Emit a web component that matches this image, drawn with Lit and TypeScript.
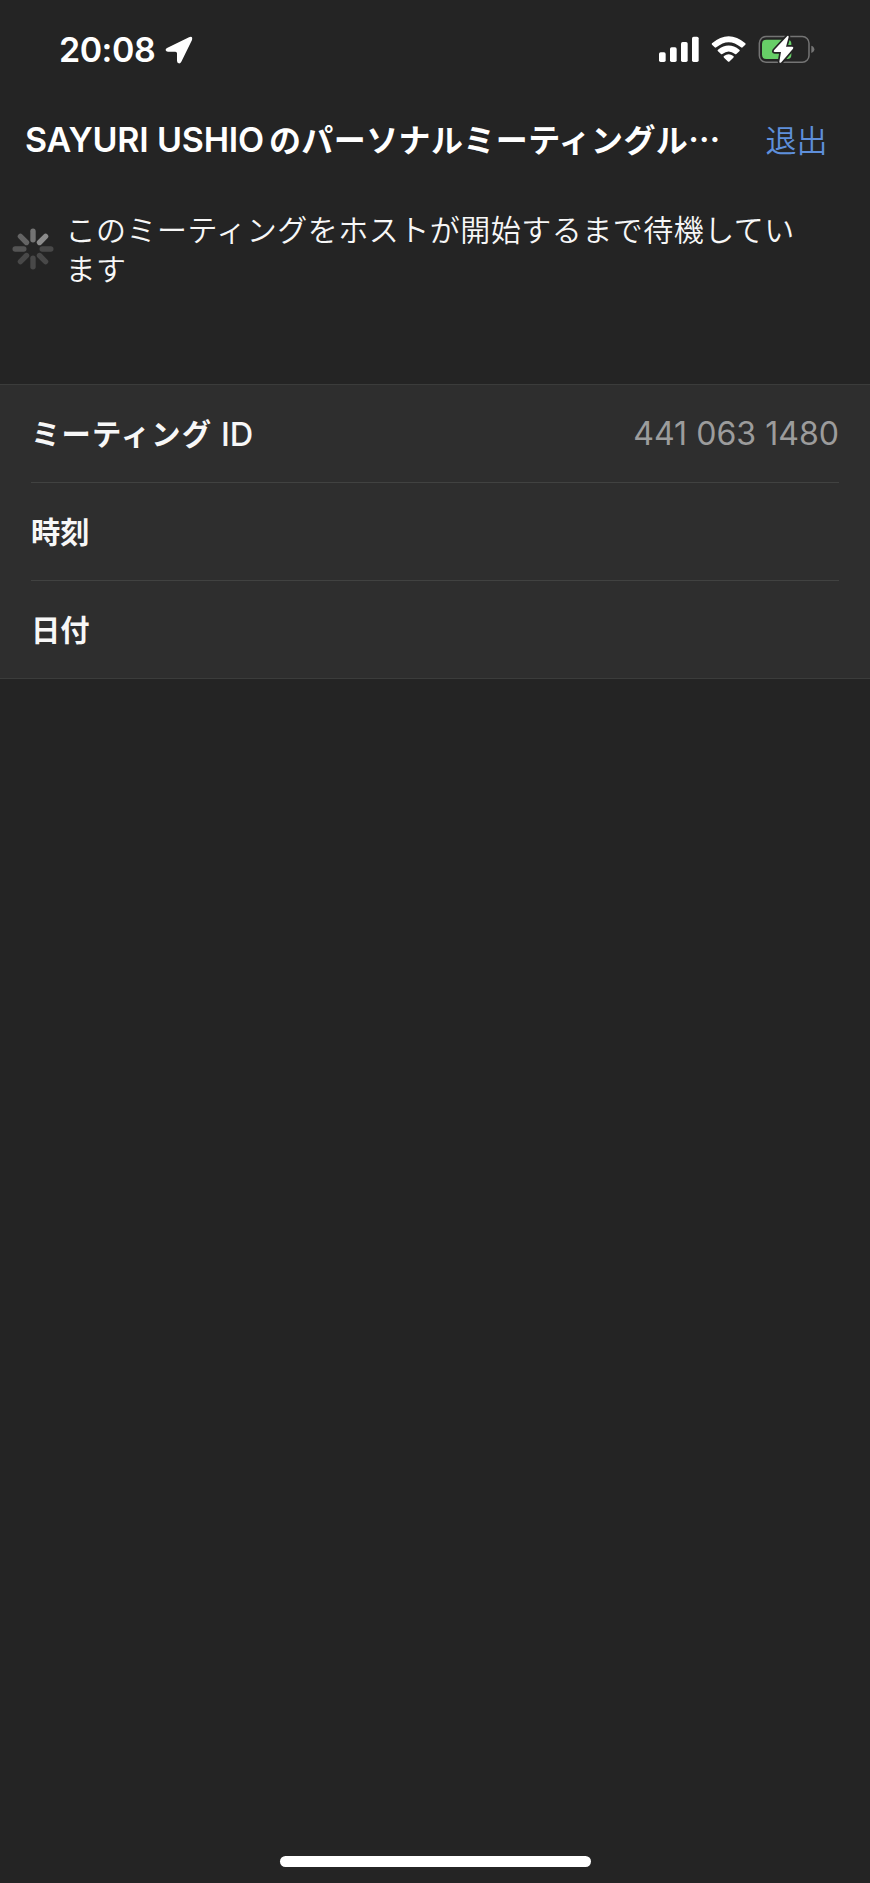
import { LitElement, html, css, svg } from "lit";
import { customElement } from "lit/decorators.js";

const spokes = [
  [0, "#747474"], [45, "#8b8b8b"], [90, "#484848"], [135, "#484848"],
  [180, "#484848"], [225, "#484848"], [270, "#545454"], [315, "#646464"],
] as const;

@customElement("status-bar")
class StatusBar extends LitElement {
  static styles = css`
    :host { display: flex; height: 60px; padding: 20px 55px 0 59px; align-items: center; }
    .time { font: 600 34px/60px Inter, sans-serif; color: #fff; width: 106px; white-space: nowrap; letter-spacing: -0.5px; }
    svg { display: block; height: 60px; flex: none; }
    .arrow { width: 28px; }
    .signal { width: 40px; margin-left: auto; }
    .wifi { width: 36px; margin-left: 12px; }
    .battery { width: 57px; margin-left: 11px; }
  `;
  render() {
    return html`
      <span class="time">20:08</span>
      <svg class="arrow" viewBox="375 0 84 180"><path d="M381 84 L447 52 Q459 47 456 60 L424 125 Q421 131 416 130 Q411 128 411 122 L411 100 Q411 95 406 95 L384 95 Q378 95 377 91 Q376 87 381 84Z" fill="#fff"/></svg>
      <svg class="signal" viewBox="57 0 120 180" fill="#fff">
        <rect x="57" y="97" width="20" height="29" rx="5"/><rect x="90" y="82" width="20" height="44" rx="5"/>
        <rect x="123" y="66" width="20" height="60" rx="5"/><rect x="156" y="50" width="20" height="76" rx="5"/>
      </svg>
      <svg class="wifi" viewBox="213 0 108 180" fill="#fff">
        <path d="M216 70 Q266 28 316 70 Q318 72 316 74 L308 82 Q306 84 303 82 Q266 51 229 82 Q226 84 224 82 L216 74 Q214 72 216 70Z"/>
        <path d="M234 89 Q266 64 298 89 Q301 91 298 94 L289 102 Q287 104 285 102 Q266 87 247 102 Q245 104 243 102 L234 94 Q231 91 234 89Z"/>
        <path d="M252 108 Q266 98 280 108 Q283 110 280 113 L269 124 Q266 127 263 124 L252 113 Q249 110 252 108Z"/>
      </svg>
      <svg class="battery" viewBox="354 0 171 180">
        <rect x="358" y="49.500" width="149" height="77" rx="20" fill="none" stroke="#747474" stroke-width="4.500"/>
        <path d="M514 77 Q523 80 523 88 Q523 96 514 99Z" fill="#747474"/>
        <path d="M379 59 H442 Q454 59 454 71 V105 Q454 117 442 117 H379 Q366 117 366 104 V72 Q366 59 379 59Z" fill="#67ce67"/>
        <path d="M442 48 L402 91 Q399 96 404 96 H423 L418 125 Q419 131 424 127 L459 86 Q462 81 457 80 H438 L446 51 Q446 46 442 48Z" fill="#fff" stroke="#242424" stroke-width="10" stroke-linejoin="round" paint-order="stroke"/>
      </svg>`;
  }
}

@customElement("info-list")
class InfoList extends LitElement {
  static styles = css`
    :host { display: block; box-sizing: border-box; height: 295px; padding: 0 31px; background: #2e2e2e; border-top: 1px solid #3b3c3b; border-bottom: 1px solid #3b3c3b; }
    .row { box-sizing: border-box; height: 98px; display: flex; align-items: center; justify-content: space-between; border-bottom: 1px solid #414241; }
    .row:last-child { border-bottom: 0; }
    .label { display: flex; font: 700 29.3px/44px "Noto Sans CJK JP", sans-serif; color: #f7f7f7; white-space: pre; padding-bottom: 4px; }
    .kana { letter-spacing: 1.2px; }
    .latin { font: 450 32.5px/44px Inter, sans-serif; padding-top: 3px; margin-bottom: -3px; }
    .value { font: 400 32.1px/44px Inter, sans-serif; color: #9c9c9c; white-space: nowrap; }
  `;
  render() {
    return html`
      <div class="row"><span class="label"><span class="kana">ミーティング</span><span class="latin"> ID</span></span><span class="value">441 063 1480</span></div>
      <div class="row"><span class="label">時刻</span></div>
      <div class="row"><span class="label">日付</span></div>`;
  }
}

@customElement("app-root")
class AppRoot extends LitElement {
  static styles = css`
    :host { display: flex; flex-direction: column; height: 1883px; background: #242424; overflow: hidden; font-family: "Noto Sans CJK JP", sans-serif; }
    .header { display: flex; align-items: center; justify-content: space-between; height: 60px; padding: 0 42.5px 0 25px; margin-top: 30px; color: #fff; }
    .title { margin: 0; display: flex; white-space: nowrap; font-weight: 700; font-size: 32px; line-height: 60px; }
    .name { font: 600 34px/60px Inter, sans-serif; letter-spacing: -0.2px; margin-right: 5px; }
    .room { letter-spacing: 0.4px; margin-top: -2px; }
    .leave { font-size: 31px; line-height: 60px; color: #5e8fdb; font-weight: 350; white-space: nowrap; padding-bottom: 2px; }
    .waiting { display: flex; align-items: center; height: 78px; margin-top: 40px; padding-left: 11.5px; }
    .spinner { width: 42px; height: 42px; flex: none; }
    .message { margin: 0 0 0 12px; padding-bottom: 3px; font-size: 30px; letter-spacing: 0.5px; line-height: 38.5px; font-weight: 350; color: #f7f7f7; white-space: nowrap; }
    .list { margin-top: 96px; }
    .home { width: 311px; height: 11px; border-radius: 6px; background: #fff; margin: auto auto 16px 280px; }
  `;
  render() {
    return html`
      <status-bar></status-bar>
      <div class="header">
        <h1 class="title"><span class="name">SAYURI USHIO</span><span class="room">のパーソナルミーティングル…</span></h1>
        <span class="leave">退出</span>
      </div>
      <div class="waiting">
        <svg class="spinner" viewBox="-21 -21 42 42">
          ${spokes.map(([a, c]) => svg`<rect x="-2.7" y="-20.500" width="5.400" height="14" rx="2.700" fill=${c} transform=${`rotate(${a})`}/>`)}
        </svg>
        <p class="message">このミーティングをホストが開始するまで待機してい<br>ます</p>
      </div>
      <info-list class="list"></info-list>
      <div class="home"></div>`;
  }
}
